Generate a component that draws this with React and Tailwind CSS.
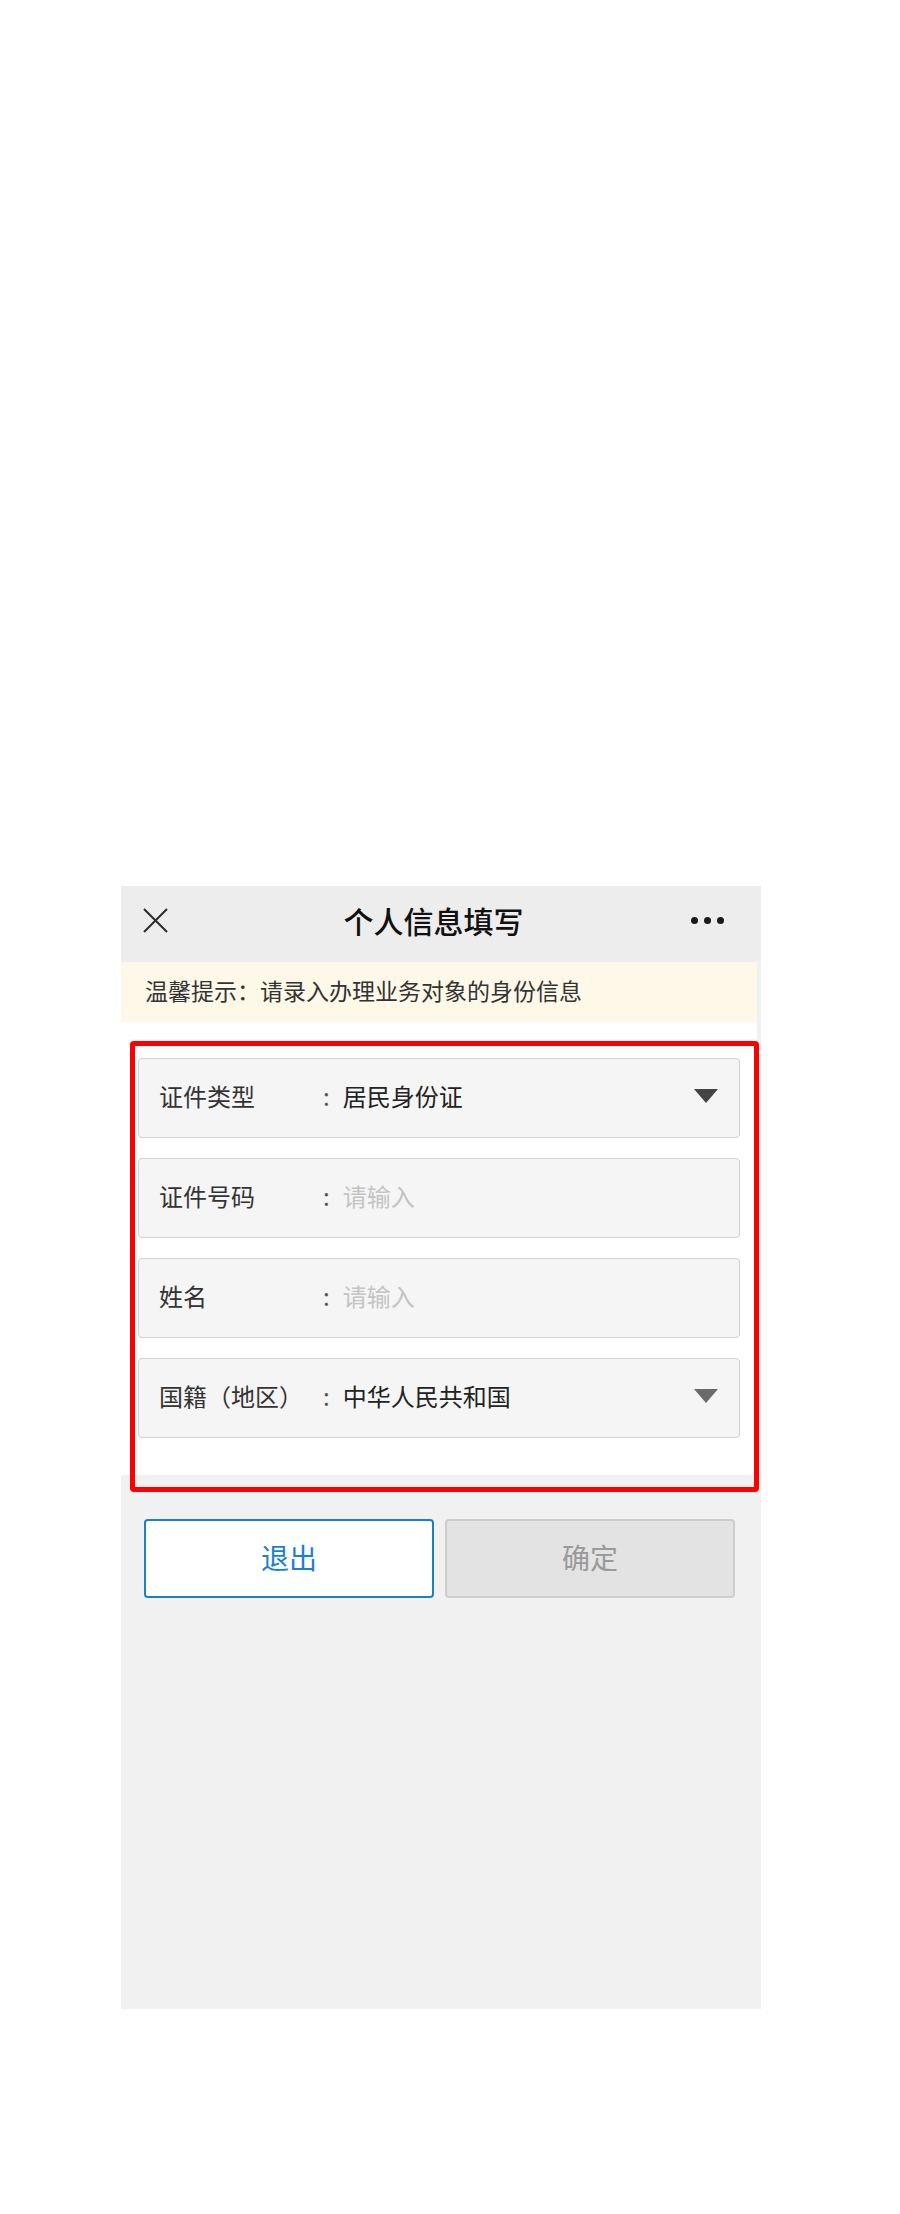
import React from "react";

const font = { fontFamily: '"Noto Sans CJK SC", "Noto Sans", sans-serif' };

const Arrow = ({ color }) => (
    <svg width="24" height="14" viewBox="0 0 24 14" className="shrink-0">
        <polygon points="0,0 24,0 12,14" fill={color} />
    </svg>
);

const Field = ({ label, value, placeholder, arrow }) => (
    <div className="flex items-center h-[80px] pl-[20px] pr-[21px] pb-[4px] bg-[#f5f5f5] border border-[#d2d2d2] rounded-[4px]">
        <span className="w-[164px] text-[24px] text-[#333] whitespace-nowrap">{label}</span>
        <span className="text-[24px] text-[#555] mr-[13px]">:</span>
        <span className={`flex-1 text-[24px] ${value ? "text-[#222]" : "text-[#c4c4c4]"}`}>
            {value || placeholder}
        </span>
        {arrow && <Arrow color={arrow} />}
    </div>
);

export default function App() {
    return (
        <div className="w-[900px] h-[2214px] bg-white pt-[886px]" style={font}>
            <div className="relative ml-[121px] w-[640px] h-[1123px] bg-[#f1f1f1]">
                {/* Header */}
                <div className="flex items-center justify-between h-[76px] bg-[#ededed] pl-[22px] pr-[37px] pb-[8px]">
                    <svg width="25" height="25" viewBox="0 0 25 25">
                        <path d="M1 1 L24 24 M24 1 L1 24" stroke="#2a2a2a" strokeWidth="2" fill="none" />
                    </svg>
                    <h1 className="text-[30px] font-medium text-[#111] ml-[8px]">个人信息填写</h1>
                    <div className="flex items-center gap-[6px]">
                        <span className="w-[7px] h-[7px] rounded-full bg-[#1a1a1a]" />
                        <span className="w-[7px] h-[7px] rounded-full bg-[#1a1a1a]" />
                        <span className="w-[7px] h-[7px] rounded-full bg-[#1a1a1a]" />
                    </div>
                </div>

                {/* Tip */}
                <div className="flex items-center h-[60px] w-[636px] bg-[#fdf8e8] px-[24px] pb-[3px]">
                    <p className="text-[23px] text-[#333]">温馨提示：请录入办理业务对象的身份信息</p>
                </div>

                {/* Form */}
                <div className="w-[636px] bg-white pl-[17px] pr-[17px] pt-[36px] pb-[37px] flex flex-col gap-[20px]">
                    <Field label="证件类型" value="居民身份证" arrow="#444" />
                    <Field label="证件号码" placeholder="请输入" />
                    <Field label="姓名" placeholder="请输入" />
                    <Field label="国籍（地区）" value="中华人民共和国" arrow="#6a6a6a" />
                </div>

                {/* Buttons */}
                <div className="flex gap-[11px] pl-[23px] mt-[44px]">
                    <button className="w-[290px] h-[79px] pb-[4px] bg-white border-2 border-[#1b7fd0] rounded-[4px] text-[28px] text-[#1b7fd0]">
                        退出
                    </button>
                    <button className="w-[290px] h-[79px] pb-[4px] bg-[#e3e3e3] border-2 border-[#cdcdcd] rounded-[4px] text-[28px] text-[#9a9a9a]">
                        确定
                    </button>
                </div>

                {/* Annotation box */}
                <div className="absolute left-[9px] top-[155px] w-[629px] h-[451px] border-[5px] border-[#ff0000] rounded-[4px] pointer-events-none" />
            </div>
        </div>
    );
}
